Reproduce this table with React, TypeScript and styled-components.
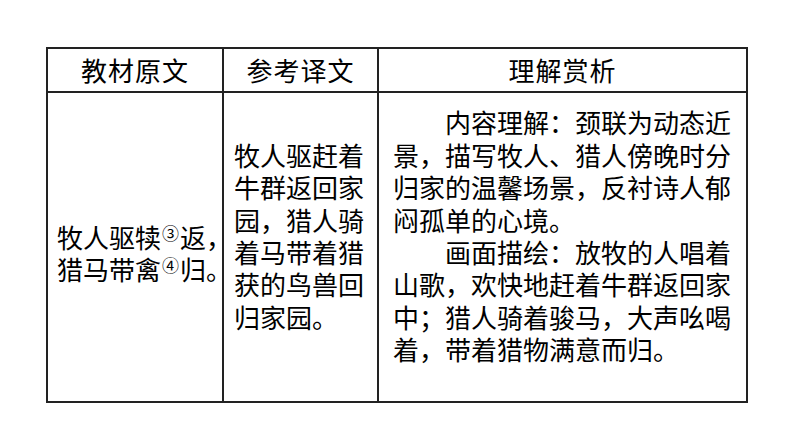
import React from 'react'
import styled, { createGlobalStyle } from 'styled-components'

const GlobalStyle = createGlobalStyle`
  html, body {
    margin: 0;
    padding: 0;
    background: #ffffff;
  }
  body {
    font-family: "Noto Sans CJK SC", "Noto Sans", sans-serif;
    color: #000;
  }
`

const Page = styled.div`
  width: 794px;
  height: 447px;
  padding: 47px 0 0 46px;
  box-sizing: border-box;
`

const Table = styled.table`
  border-collapse: collapse;
  table-layout: fixed;
  width: 700px;
  font-size: 26px;
  line-height: 32.4px;
`

const HeadCell = styled.th`
  height: 42px;
  border: 2px solid #222;
  font-weight: 400;
  text-align: center;
  vertical-align: middle;
  padding: 0;
  letter-spacing: 1px;
`

// $lift moves the text block up (positive) or down (negative) from the middle
const Cell = styled.td<{ $pad?: number; $lift?: number }>`
  height: 310px;
  box-sizing: border-box;
  border: 2px solid #222;
  vertical-align: middle;
  text-align: left;
  padding: ${(p) => Math.max(0, -(p.$lift ?? 0))}px ${(p) => p.$pad ?? 10}px
    ${(p) => Math.max(0, p.$lift ?? 0)}px;
`

const PoemLine = styled.div`
  white-space: nowrap;
`

const Note = styled.span`
  display: inline-block;
  font-size: 17px;
  line-height: 17px;
  vertical-align: 8px;
  margin: 0 1px;
`

const Para = styled.p`
  margin: 0;
  text-indent: 2em;
`

export default function App() {
  return (
    <>
      <GlobalStyle />
      <Page>
        <Table>
          <colgroup>
            <col style={{ width: 176 }} />
            <col style={{ width: 155 }} />
            <col style={{ width: 369 }} />
          </colgroup>
          <thead>
            <tr>
              <HeadCell>教材原文</HeadCell>
              <HeadCell>参考译文</HeadCell>
              <HeadCell>理解赏析</HeadCell>
            </tr>
          </thead>
          <tbody>
            <tr>
              <Cell $pad={9} $lift={-12}>
                <PoemLine>牧人驱犊<Note>③</Note>返，</PoemLine>
                <PoemLine>猎马带禽<Note>④</Note>归。</PoemLine>
              </Cell>
              <Cell $pad={10} $lift={22}>牧人驱赶着牛群返回家园，猎人骑着马带着猎获的鸟兽回归家园。</Cell>
              <Cell $pad={14} $lift={22}>
                <Para>内容理解：颈联为动态近景，描写牧人、猎人傍晚时分归家的温馨场景，反衬诗人郁闷孤单的心境。</Para>
                <Para>画面描绘：放牧的人唱着山歌，欢快地赶着牛群返回家中；猎人骑着骏马，大声吆喝着，带着猎物满意而归。</Para>
              </Cell>
            </tr>
          </tbody>
        </Table>
      </Page>
    </>
  )
}
